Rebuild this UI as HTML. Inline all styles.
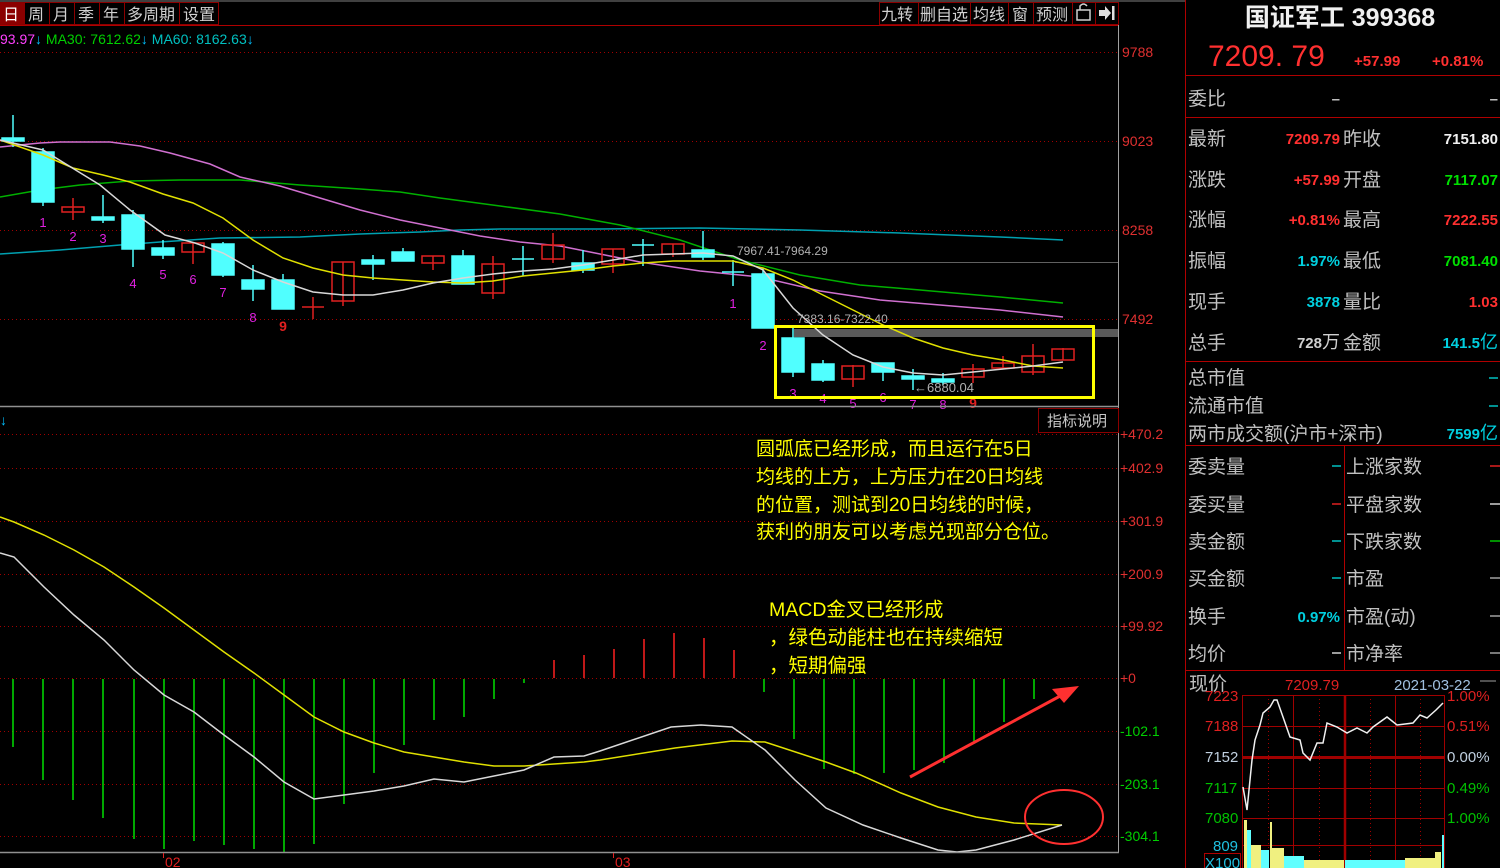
<!DOCTYPE html>
<html><head><meta charset="utf-8"><style>
html,body{margin:0;padding:0;background:#000;overflow:hidden}
svg{display:block}
text{font-family:"Liberation Sans","Noto Sans CJK SC",sans-serif}
.m{font-family:"Liberation Mono","Noto Sans CJK SC",monospace}
.lb{fill:#c0c0c0;font-size:19px}
.v{font-size:15px;font-weight:bold;font-family:"Liberation Sans","Noto Sans CJK SC",sans-serif}
</style></head><body>
<svg width="1500" height="868" viewBox="0 0 1500 868" xmlns="http://www.w3.org/2000/svg">
<rect width="1500" height="868" fill="#000"/>
<line x1="0" y1="1" x2="1185" y2="1" stroke="#808080" stroke-width="1"/>
<rect x="0" y="2" width="24" height="23" fill="#8b0000"/>
<g stroke="#8b0000" fill="none" stroke-width="1">
<rect x="24.5" y="2.5" width="25" height="22"/><rect x="49.5" y="2.5" width="25" height="22"/><rect x="74.5" y="2.5" width="25" height="22"/><rect x="99.5" y="2.5" width="25" height="22"/><rect x="124.5" y="2.5" width="55" height="22"/><rect x="179.5" y="2.5" width="39" height="22"/>
<rect x="879.5" y="2.5" width="39" height="22"/><rect x="918.5" y="2.5" width="52" height="22"/><rect x="970.5" y="2.5" width="38" height="22"/><rect x="1008.5" y="2.5" width="25" height="22"/><rect x="1033.5" y="2.5" width="39" height="22"/><rect x="1072.5" y="2.5" width="23" height="22"/><rect x="1095.5" y="2.5" width="23" height="22"/>
</g>
<line x1="0" y1="25.5" x2="1119" y2="25.5" stroke="#b00000"/>
<g fill="#d0d0d0" font-size="16">
<text x="3" y="20" fill="#fff">日</text><text x="28" y="20">周</text><text x="53" y="20">月</text><text x="78" y="20">季</text><text x="103" y="20">年</text><text x="127" y="20">多周期</text><text x="183" y="20">设置</text>
<text x="881" y="20">九转</text><text x="920" y="20">删自选</text><text x="973" y="20">均线</text><text x="1012" y="20">窗</text><text x="1036" y="20">预测</text>
</g>
<rect x="1077" y="10" width="13" height="10" fill="none" stroke="#d0d0d0" stroke-width="1.5"/>
<path d="M1080 10 V6 Q1083.5 2 1087 6" fill="none" stroke="#d0d0d0" stroke-width="1.5"/>
<path d="M1099 10 H1105 V6 L1111 13 L1105 20 V16 H1099 Z" fill="#e0e0e0"/><rect x="1112" y="6" width="2.5" height="14" fill="#e0e0e0"/>
<text x="0" y="44" font-size="14" fill="#ff40ff">93.97<tspan fill="#00c0ff">↓</tspan><tspan fill="#00d000"> MA30: 7612.62</tspan><tspan fill="#00c0ff">↓</tspan><tspan fill="#00c0c0"> MA60: 8162.63</tspan><tspan fill="#00c0ff">↓</tspan></text>
<g stroke="#a00000" stroke-dasharray="1,3" stroke-width="1">
<line x1="0" y1="52.5" x2="1118" y2="52.5"/><line x1="0" y1="141.5" x2="1118" y2="141.5"/><line x1="0" y1="230.5" x2="1118" y2="230.5"/><line x1="0" y1="319.5" x2="1118" y2="319.5"/>
</g>
<g fill="#e03030" font-size="14"><text x="1122" y="57">9788</text><text x="1122" y="146">9023</text><text x="1122" y="235">8258</text><text x="1122" y="324">7492</text></g>
<line x1="735" y1="262.5" x2="1118" y2="262.5" stroke="#606060"/>
<rect x="794" y="329" width="324" height="8" fill="#5a5a5a"/>
<polyline fill="none" stroke="#00a0b0" stroke-width="1.5" points="0,254 60,250 120,245 160,242 220,238 300,237 360,234 420,232 460,230 500,229 600,229 700,228 800,230 900,233 1000,237 1063,240"/>
<polyline fill="none" stroke="#00b000" stroke-width="1.5" points="0,197 40,190 80,185 130,181 180,180 240,180 300,185 360,189 400,192 440,198 500,206 560,214 620,225 680,240 740,260 800,275 860,285 920,290 1000,297 1063,303"/>
<polyline fill="none" stroke="#d070d0" stroke-width="1.5" points="0,147 40,143 60,142 110,142 140,146 170,153 210,164 240,177 280,186 320,198 360,210 400,220 440,228 480,236 520,242 560,246 600,254 640,262 700,271 760,277 820,291 880,300 940,305 1000,310 1063,317"/>
<g stroke-width="1.5">
<g stroke="#50ffff" fill="#50ffff">
<line x1="13" y1="115" x2="13" y2="147"/><rect x="2" y="138" width="22" height="3"/>
<line x1="43" y1="148" x2="43" y2="206"/><rect x="32" y="152" width="22" height="50"/>
<line x1="103" y1="195" x2="103" y2="223"/><rect x="92" y="217" width="22" height="3"/>
<line x1="133" y1="210" x2="133" y2="267"/><rect x="122" y="215" width="22" height="34"/>
<line x1="163" y1="240" x2="163" y2="259"/><rect x="152" y="248" width="22" height="7"/>
<line x1="223" y1="242" x2="223" y2="277"/><rect x="212" y="244" width="22" height="31"/>
<line x1="253" y1="265" x2="253" y2="301"/><rect x="242" y="280" width="22" height="9"/>
<line x1="283" y1="274" x2="283" y2="309"/><rect x="272" y="280" width="22" height="29"/>
<line x1="373" y1="255" x2="373" y2="280"/><rect x="362" y="260" width="22" height="4"/>
<line x1="403" y1="248" x2="403" y2="261"/><rect x="392" y="252" width="22" height="9"/>
<line x1="463" y1="250" x2="463" y2="284"/><rect x="452" y="256" width="22" height="28"/>
<line x1="523" y1="246" x2="523" y2="276"/><line x1="512" y1="259" x2="534" y2="259"/>
<line x1="583" y1="250" x2="583" y2="273"/><rect x="572" y="263" width="22" height="7"/>
<line x1="643" y1="239" x2="643" y2="266"/><line x1="632" y1="245" x2="654" y2="245"/>
<line x1="703" y1="231" x2="703" y2="260"/><rect x="692" y="250" width="22" height="7"/>
<line x1="733" y1="260" x2="733" y2="286"/><line x1="722" y1="272" x2="744" y2="272"/>
<line x1="763" y1="268" x2="763" y2="328"/><rect x="752" y="274" width="22" height="54"/>
<line x1="793" y1="328" x2="793" y2="377"/><rect x="782" y="338" width="22" height="34"/>
<line x1="823" y1="360" x2="823" y2="382"/><rect x="812" y="364" width="22" height="16"/>
<line x1="883" y1="363" x2="883" y2="381"/><rect x="872" y="363" width="22" height="9"/>
<line x1="913" y1="369" x2="913" y2="390"/><rect x="902" y="376" width="22" height="3"/>
<line x1="943" y1="373" x2="943" y2="385"/><rect x="932" y="379" width="22" height="3"/>
</g>
<g stroke="#e02020" fill="none">
<line x1="73" y1="198" x2="73" y2="220"/><rect x="62" y="207" width="22" height="5"/>
<line x1="193" y1="243" x2="193" y2="264"/><rect x="182" y="243" width="22" height="9"/>
<line x1="313" y1="297" x2="313" y2="319"/><line x1="302" y1="307" x2="324" y2="307"/>
<line x1="343" y1="262" x2="343" y2="306"/><rect x="332" y="262" width="22" height="39"/>
<line x1="433" y1="256" x2="433" y2="270"/><rect x="422" y="256" width="22" height="7"/>
<line x1="493" y1="256" x2="493" y2="299"/><rect x="482" y="264" width="22" height="29"/>
<line x1="553" y1="233" x2="553" y2="263"/><rect x="542" y="245" width="22" height="14"/>
<line x1="613" y1="249" x2="613" y2="273"/><rect x="602" y="249" width="22" height="15"/>
<line x1="673" y1="244" x2="673" y2="257"/><rect x="662" y="244" width="22" height="10"/>
<line x1="853" y1="365" x2="853" y2="387"/><rect x="842" y="366" width="22" height="13"/>
<line x1="973" y1="364" x2="973" y2="383"/><rect x="962" y="369" width="22" height="8"/>
<line x1="1003" y1="356" x2="1003" y2="368"/><rect x="992" y="363" width="22" height="5"/>
<line x1="1033" y1="344" x2="1033" y2="375"/><rect x="1022" y="356" width="22" height="16"/>
<line x1="1063" y1="348" x2="1063" y2="360"/><rect x="1052" y="349" width="22" height="11"/>
</g>
</g>
<polyline fill="none" stroke="#e0e000" stroke-width="1.5" points="0,140 43,155 73,168 103,175 130,182 163,194 193,203 223,218 253,240 283,258 313,268 343,275 373,278 403,280 433,282 463,283 493,281 523,276 553,273 583,270 613,266 643,263 673,261 703,261 733,261 763,268 793,280 823,295 853,310 883,325 913,338 943,348 973,355 1003,360 1033,366 1063,368"/>
<polyline fill="none" stroke="#d8d8d8" stroke-width="1.5" points="0,140 43,150 100,185 130,210 165,235 195,243 223,253 253,270 283,282 313,292 343,295 373,295 403,290 433,283 463,278 493,274 523,271 553,269 583,265 613,260 643,255 673,254 703,253 733,256 763,270 793,308 823,335 853,355 883,367 913,373 943,375 973,372 1003,369 1033,366 1063,362"/>
<g fill="#e020e0" font-size="13" text-anchor="middle">
<text x="43" y="227">1</text><text x="73" y="241">2</text><text x="103" y="243">3</text><text x="133" y="288">4</text><text x="163" y="279">5</text><text x="193" y="284">6</text><text x="223" y="297">7</text><text x="253" y="322">8</text>
<text x="733" y="308">1</text><text x="763" y="350">2</text><text x="793" y="398">3</text><text x="823" y="403">4</text><text x="853" y="408">5</text><text x="883" y="402">6</text><text x="913" y="409">7</text><text x="943" y="409">8</text>
</g>
<g fill="#e02020" font-size="14" font-weight="bold" text-anchor="middle"><text x="283" y="331">9</text><text x="973" y="408">9</text></g>
<g class="m" fill="#b0b0b0" font-size="12"><text x="737" y="255">7967.41-7964.29</text><text x="797" y="323">7383.16-7322.40</text><text x="914" y="392" font-size="13">←6880.04</text></g>
<rect x="775.5" y="326.5" width="318" height="71" fill="none" stroke="#ffff00" stroke-width="3"/>
<line x1="0" y1="406.5" x2="1119" y2="406.5" stroke="#909090" stroke-width="1.5"/>
<line x1="1118.5" y1="25" x2="1118.5" y2="852" stroke="#a0a0a0"/>
<rect x="1038.5" y="408.5" width="80" height="24" fill="#000" stroke="#8b0000"/>
<text x="1047" y="426" font-size="15" fill="#c8c8c8">指标说明</text>
<text x="0" y="425" font-size="14" fill="#00c0ff">↓</text>
<g stroke="#a00000" stroke-dasharray="1,3"><line x1="0" y1="434.5" x2="1118" y2="434.5"/><line x1="0" y1="468.5" x2="1118" y2="468.5"/><line x1="0" y1="521.5" x2="1118" y2="521.5"/><line x1="0" y1="574.5" x2="1118" y2="574.5"/><line x1="0" y1="626.5" x2="1118" y2="626.5"/><line x1="0" y1="678.5" x2="1118" y2="678.5"/><line x1="0" y1="731.5" x2="1118" y2="731.5"/><line x1="0" y1="784.5" x2="1118" y2="784.5"/><line x1="0" y1="836.5" x2="1118" y2="836.5"/></g>
<g font-size="14"><g fill="#e03030"><text x="1120" y="439">+470.2</text><text x="1120" y="473">+402.9</text><text x="1120" y="526">+301.9</text><text x="1120" y="579">+200.9</text><text x="1120" y="631">+99.92</text><text x="1120" y="683">+0</text></g><g fill="#00d000"><text x="1120" y="736">-102.1</text><text x="1120" y="789">-203.1</text><text x="1120" y="841">-304.1</text></g></g>
<g stroke="#00e000" stroke-width="1.5">
<line x1="13" y1="679" x2="13" y2="747"/><line x1="43" y1="679" x2="43" y2="780"/><line x1="73" y1="679" x2="73" y2="800"/><line x1="103" y1="679" x2="103" y2="818"/><line x1="134" y1="679" x2="134" y2="839"/><line x1="164" y1="679" x2="164" y2="849"/><line x1="194" y1="679" x2="194" y2="841"/><line x1="224" y1="679" x2="224" y2="845"/><line x1="254" y1="679" x2="254" y2="849"/><line x1="284" y1="679" x2="284" y2="852"/><line x1="314" y1="679" x2="314" y2="844"/><line x1="344" y1="679" x2="344" y2="804"/><line x1="374" y1="679" x2="374" y2="773"/><line x1="404" y1="679" x2="404" y2="745"/><line x1="434" y1="679" x2="434" y2="720"/><line x1="464" y1="679" x2="464" y2="717"/><line x1="494" y1="679" x2="494" y2="699"/><line x1="524" y1="679" x2="524" y2="683"/>
<line x1="764" y1="679" x2="764" y2="692"/><line x1="794" y1="679" x2="794" y2="739"/><line x1="824" y1="679" x2="824" y2="769"/><line x1="854" y1="679" x2="854" y2="774"/><line x1="884" y1="679" x2="884" y2="773"/><line x1="914" y1="679" x2="914" y2="770"/><line x1="944" y1="679" x2="944" y2="763"/><line x1="974" y1="679" x2="974" y2="742"/><line x1="1004" y1="679" x2="1004" y2="722"/><line x1="1034" y1="679" x2="1034" y2="699"/>
</g>
<g stroke="#ff2020" stroke-width="1.5"><line x1="554" y1="678" x2="554" y2="660"/><line x1="584" y1="678" x2="584" y2="655"/><line x1="614" y1="678" x2="614" y2="649"/><line x1="644" y1="678" x2="644" y2="639"/><line x1="674" y1="678" x2="674" y2="633"/><line x1="704" y1="678" x2="704" y2="638"/><line x1="734" y1="678" x2="734" y2="650"/></g>
<polyline fill="none" stroke="#e0e000" stroke-width="1.5" points="0,517 14,522 44,535 74,550 104,567 134,587 164,608 194,630 224,652 254,673 284,695 314,717 344,732 374,743 404,752 434,757 464,762 494,766 524,766 554,764 584,762 600,760 675,748 732,741 765,742 826,762 856,773 901,793 938,807 976,817 1014,823 1062,825"/>
<polyline fill="none" stroke="#d8d8d8" stroke-width="1.5" points="0,553 14,557 44,587 74,615 104,640 134,670 164,695 194,712 224,735 254,757 284,782 314,799 344,795 374,791 404,786 434,779 464,782 494,776 524,770 554,757 584,756 600,751 671,727 701,725 732,727 765,750 795,780 826,808 863,825 901,838 938,850 957,852 976,850 1014,840 1062,825"/>
<ellipse cx="1064" cy="817" rx="39" ry="27" fill="none" stroke="#ff3030" stroke-width="2"/>
<line x1="910" y1="777" x2="1062" y2="695" stroke="#ff3030" stroke-width="3"/>
<path d="M1079 686 L1052 689 L1064 703 Z" fill="#ff3030"/>
<g fill="#ffff00" font-size="19">
<text x="756" y="455">圆弧底已经形成，而且运行在5日</text>
<text x="756" y="483">均线的上方，上方压力在20日均线</text>
<text x="756" y="511">的位置，测试到20日均线的时候，</text>
<text x="756" y="538">获利的朋友可以考虑兑现部分仓位。</text>
</g>
<g fill="#ffff00" font-size="19.5">
<text x="769" y="616">MACD金叉已经形成</text>
<text x="769" y="644">，绿色动能柱也在持续缩短</text>
<text x="769" y="672">，短期偏强</text>
</g>
<line x1="0" y1="852.5" x2="1119" y2="852.5" stroke="#909090" stroke-width="1.5"/>
<g fill="#e02020" font-size="14"><text x="165" y="867">02</text><text x="615" y="867">03</text></g>
<line x1="163.5" y1="853" x2="163.5" y2="858" stroke="#e02020"/><line x1="613.5" y1="853" x2="613.5" y2="858" stroke="#e02020"/>
<line x1="1185.5" y1="0" x2="1185.5" y2="868" stroke="#b00000"/>
<text x="1340" y="26" text-anchor="middle" font-size="25" font-weight="bold" fill="#f0f0f0" font-family="'Liberation Serif','Noto Serif CJK SC',serif">国证军工 399368</text>
<text x="1208" y="66" font-size="30" fill="#ff3030" font-family="'Liberation Serif','Noto Serif CJK SC',serif">7209. 79</text>
<text x="1354" y="66" class="v" fill="#ff3030">+57.99</text><text x="1432" y="66" class="v" fill="#ff3030">+0.81%</text>
<g stroke="#b00000"><line x1="1186" y1="75.5" x2="1500" y2="75.5"/><line x1="1186" y1="117.5" x2="1500" y2="117.5"/><line x1="1186" y1="361.5" x2="1500" y2="361.5"/><line x1="1186" y1="445.5" x2="1500" y2="445.5"/><line x1="1186" y1="670.5" x2="1500" y2="670.5"/><line x1="1344.5" y1="445" x2="1344.5" y2="670"/></g>
<g class="lb">
<text x="1188" y="105">委比</text>
<text x="1188" y="145">最新</text><text x="1188" y="186">涨跌</text><text x="1188" y="226">涨幅</text><text x="1188" y="267">振幅</text><text x="1188" y="308">现手</text><text x="1188" y="349">总手</text>
<text x="1343" y="145">昨收</text><text x="1343" y="186">开盘</text><text x="1343" y="226">最高</text><text x="1343" y="267">最低</text><text x="1343" y="308">量比</text><text x="1343" y="349">金额</text>
<text x="1188" y="384">总市值</text><text x="1188" y="412">流通市值</text><text x="1188" y="440">两市成交额(沪市+深市)</text>
<text x="1188" y="473">委卖量</text><text x="1188" y="511">委买量</text><text x="1188" y="548">卖金额</text><text x="1188" y="585">买金额</text><text x="1188" y="623">换手</text><text x="1188" y="660">均价</text>
<text x="1346" y="473">上涨家数</text><text x="1346" y="511">平盘家数</text><text x="1346" y="548">下跌家数</text><text x="1346" y="585">市盈</text><text x="1346" y="623">市盈(动)</text><text x="1346" y="660">市净率</text>
</g>
<g class="v" text-anchor="end">
<text x="1340" y="104" fill="#c0c0c0">–</text><text x="1498" y="104" fill="#c0c0c0">–</text>
<text x="1340" y="144" fill="#ff3030">7209.79</text><text x="1498" y="144" fill="#f0f0f0">7151.80</text>
<text x="1340" y="185" fill="#ff3030">+57.99</text><text x="1498" y="185" fill="#00e000">7117.07</text>
<text x="1340" y="225" fill="#ff3030">+0.81%</text><text x="1498" y="225" fill="#ff3030">7222.55</text>
<text x="1340" y="266" fill="#00d0e0">1.97%</text><text x="1498" y="266" fill="#00e000">7081.40</text>
<text x="1340" y="307" fill="#00d0e0">3878</text><text x="1498" y="307" fill="#ff3030">1.03</text>
<text x="1340" y="348" fill="#d0d0d0">728<tspan font-weight="normal" font-size="18">万</tspan></text><text x="1498" y="348" fill="#00d0e0">141.5<tspan font-weight="normal" font-size="18">亿</tspan></text>
<text x="1498" y="439" fill="#00d0e0">7599<tspan font-weight="normal" font-size="18">亿</tspan></text>
<text x="1340" y="622" fill="#00d0e0">0.97%</text>
</g>
<g stroke-width="1.5"><line x1="1489" y1="378" x2="1498" y2="378" stroke="#00c0c0"/><line x1="1489" y1="406" x2="1498" y2="406" stroke="#00c0c0"/>
<line x1="1332" y1="466" x2="1341" y2="466" stroke="#00c0c0"/><line x1="1332" y1="504" x2="1341" y2="504" stroke="#e02020"/><line x1="1332" y1="541" x2="1341" y2="541" stroke="#00c0c0"/><line x1="1332" y1="578" x2="1341" y2="578" stroke="#00c0c0"/><line x1="1332" y1="653" x2="1341" y2="653" stroke="#d0d0d0"/>
<line x1="1490" y1="466" x2="1500" y2="466" stroke="#e02020"/><line x1="1490" y1="504" x2="1500" y2="504" stroke="#d0d0d0"/><line x1="1490" y1="541" x2="1500" y2="541" stroke="#00c000"/><line x1="1490" y1="578" x2="1500" y2="578" stroke="#a0a0a0"/><line x1="1490" y1="616" x2="1500" y2="616" stroke="#a0a0a0"/><line x1="1490" y1="653" x2="1500" y2="653" stroke="#a0a0a0"/></g>
<text x="1189" y="690" class="lb" font-size="17">现价</text>
<text x="1285" y="690" font-size="15" fill="#e02020">7209.79</text>
<text x="1394" y="690" font-size="15" fill="#a0c0e0">2021-03-22</text>
<line x1="1480" y1="681" x2="1496" y2="681" stroke="#a0a0a0"/>
<g stroke="#a00000" fill="none">
<rect x="1242.5" y="695.5" width="202" height="173"/>
<line x1="1242" y1="726.5" x2="1444" y2="726.5"/><line x1="1242" y1="788.5" x2="1444" y2="788.5"/><line x1="1242" y1="818.5" x2="1444" y2="818.5"/><line x1="1242" y1="845.5" x2="1444" y2="845.5"/>
<line x1="1242" y1="757.5" x2="1444" y2="757.5" stroke-width="3"/>
<line x1="1345" y1="695" x2="1345" y2="868" stroke-width="2.5"/>
<line x1="1293.5" y1="695" x2="1293.5" y2="868"/><line x1="1395.5" y1="695" x2="1395.5" y2="868"/>
<g stroke-dasharray="1,3"><line x1="1268.5" y1="695" x2="1268.5" y2="868"/><line x1="1319.5" y1="695" x2="1319.5" y2="868"/><line x1="1370.5" y1="695" x2="1370.5" y2="868"/><line x1="1420.5" y1="695" x2="1420.5" y2="868"/></g>
</g>
<g font-size="15"><text x="1205" y="701" fill="#e02020">7223</text><text x="1205" y="731" fill="#e02020">7188</text><text x="1205" y="762" fill="#c0d0e0">7152</text><text x="1205" y="793" fill="#00c000">7117</text><text x="1205" y="823" fill="#00c000">7080</text><text x="1213" y="851" fill="#20c0e0">809</text><text x="1205" y="868" fill="#20c0e0">X100</text>
<text x="1447" y="701" fill="#e02020">1.00%</text><text x="1447" y="731" fill="#e02020">0.51%</text><text x="1447" y="762" fill="#c0d0e0">0.00%</text><text x="1447" y="793" fill="#00c000">0.49%</text><text x="1447" y="823" fill="#00c000">1.00%</text></g>
<rect x="1204.5" y="853.5" width="36" height="15" fill="none" stroke="#b00000"/>
<polyline fill="none" stroke="#f0f0f0" stroke-width="1.5" points="1243,787 1247,810 1252,760 1255,740 1260,725 1263,713 1270,707 1274,700 1277,700 1283,717 1290,737 1300,740 1303,753 1310,760 1317,743 1323,743 1327,723 1337,727 1347,733 1357,728 1367,733 1373,727 1387,717 1397,725 1413,723 1420,715 1427,718 1436,710 1443,703"/>
<g fill="#f0f080">
<rect x="1244" y="820" width="3" height="48"/><rect x="1247" y="830" width="4" height="38" fill="#60ffff"/><rect x="1251" y="845" width="10" height="23"/><rect x="1261" y="850" width="8" height="18" fill="#60ffff"/><rect x="1270" y="822" width="2" height="46"/><rect x="1272" y="848" width="12" height="20"/><rect x="1284" y="856" width="20" height="12" fill="#60ffff"/><rect x="1304" y="860" width="40" height="8"/><rect x="1345" y="860" width="60" height="8" fill="#60ffff"/><rect x="1405" y="858" width="30" height="10"/><rect x="1435" y="852" width="6" height="16"/><rect x="1442" y="835" width="2" height="33" fill="#60ffff"/>
</g>
</svg>
</body></html>
